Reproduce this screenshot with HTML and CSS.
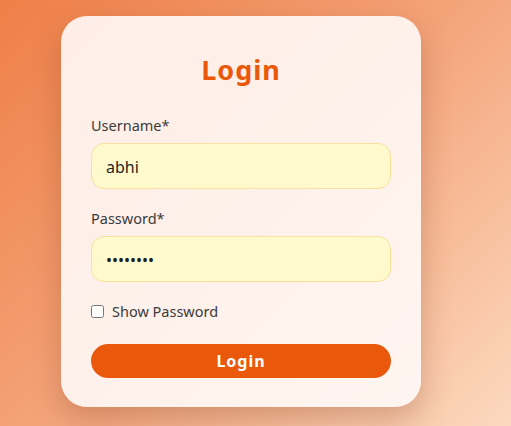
FILE: index.html
```html
<!DOCTYPE html>
<html lang="en">
<head>
<meta charset="utf-8">
<title>Login</title>
<link rel="stylesheet" href="styles.css">
</head>
<body>
<div class="page">
  <form class="card">
    <h1 class="title">Login</h1>
    <label class="label" for="username">Username*</label>
    <input class="field" id="username" type="text" value="abhi">
    <label class="label" for="password">Password*</label>
    <input class="field" id="password" type="password" value="abhi1234">
    <label class="check-row"><input type="checkbox" class="check"> Show Password</label>
    <button type="button" class="btn">Login</button>
  </form>
</div>
</body>
</html>
```

FILE: styles.css
```css
html, body {
  margin: 0;
  height: 100%;
}
body {
  font-family: "Noto Sans", "Open Sans", sans-serif;
  background: linear-gradient(135deg, #ef7f47 0%, #f4a47a 50%, #fcd9bf 100%);
  overflow: hidden;
}
.page {
  padding: 16px 0 0 61px;
}
.card {
  width: 300px;
  padding: 30px 30px 29px;
  background: rgba(255, 250, 247, 0.9);
  border-radius: 26px;
  box-shadow: 0 12px 30px rgba(120, 50, 20, 0.28);
  display: flex;
  flex-direction: column;
}
.title {
  margin: 0 0 20px;
  text-align: center;
  color: #ea580c;
  font-size: 27px;
  font-weight: 700;
  letter-spacing: 1px;
  line-height: 48px;
}
.label {
  color: #3b3b3b;
  font-size: 14.5px;
  line-height: 22px;
  margin-bottom: 7px;
}
.field {
  box-sizing: border-box;
  height: 46px;
  border: 1px solid #fbe09a;
  background: #fffacd;
  border-radius: 13px;
  padding: 2px 14px 0;
  font-family: inherit;
  font-size: 16px;
  color: #1f1f1f;
  margin: 0 0 18px;
  outline: none;
}
.check-row {
  display: flex;
  align-items: center;
  gap: 8px;
  font-size: 14.5px;
  line-height: 22px;
  color: #3b3b3b;
  margin-bottom: 22px;
}
.check {
  margin: 0;
  width: 13px;
  height: 13px;
}
.btn {
  height: 34px;
  border: none;
  border-radius: 17px;
  background: #ea580c;
  color: #fff;
  font-family: inherit;
  font-size: 16px;
  font-weight: 700;
  letter-spacing: 1px;
}
```
